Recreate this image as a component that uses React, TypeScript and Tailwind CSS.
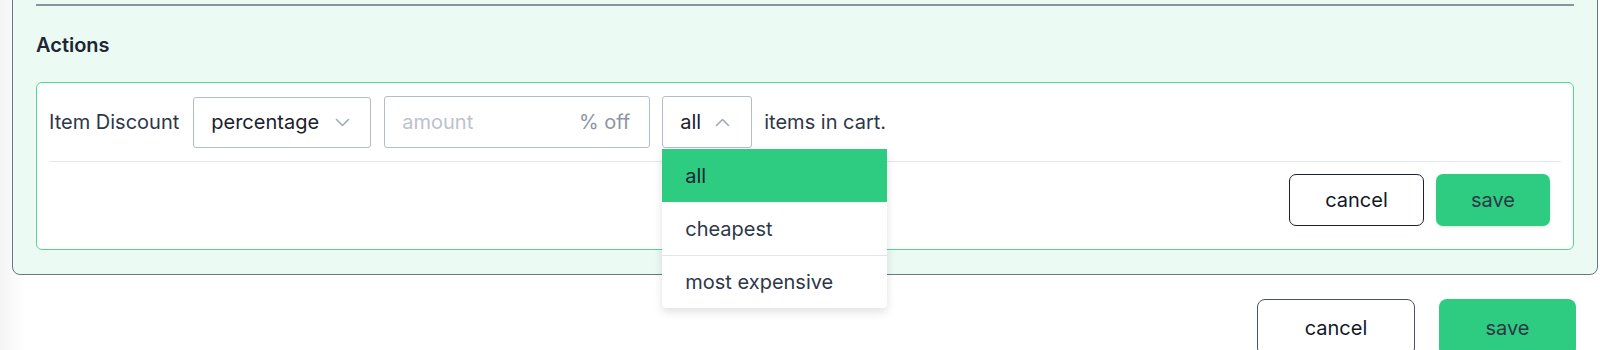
import { useState } from "react";

const font = { fontFamily: "Inter, 'Noto Sans', sans-serif" };

function Chevron({ up = false }: { up?: boolean }) {
  return (
    <svg width="15" height="9" viewBox="0 0 15 9" fill="none" className="shrink-0">
      <path
        d={up ? "M1.5 7.5L7.5 1.5L13.5 7.5" : "M1.5 1.5L7.5 7.5L13.5 1.5"}
        stroke="#a0aab8"
        strokeWidth="1.6"
        strokeLinecap="round"
        strokeLinejoin="round"
      />
    </svg>
  );
}

const options = ["all", "cheapest", "most expensive"];

export default function App() {
  const [scope] = useState("all");

  return (
    <div
      style={font}
      className="h-[350px] w-[1600px] overflow-hidden bg-[linear-gradient(to_right,#f4f4f4,#ffffff_26px)] text-[20px] text-[#2d3748]"
    >
      <div className="ml-[12px] -mt-[10px] w-[1586px] rounded-lg border border-[#6b7585] bg-[#ebfbf3] px-[23px] pt-[13px] pb-[24px]">
        <div className="h-[2px] bg-[#8b939c]" />
        <h2 className="mt-[25px] text-[20px] leading-7 font-semibold text-[#1f2633]">Actions</h2>

        <div className="mt-[23px] rounded-md border border-[#4fd793] bg-white px-[12px] pt-[13px] pb-[23px]">
          <div className="flex items-center">
            <span className="mr-[14px] whitespace-nowrap">Item Discount</span>

            <div className="flex h-[51px] w-[178px] items-center justify-between rounded-[3px] border border-[#b4bccb] bg-white pr-[20px] pl-[17px] text-[#1a202c]">
              <span>percentage</span>
              <Chevron />
            </div>

            <div className="ml-[13px] flex h-[52px] w-[266px] items-center justify-between rounded-[3px] border border-[#b4bccb] bg-white pr-[19px] pl-[17px]">
              <span className="text-[#bcc2cc]">amount</span>
              <span className="text-[#8c95a3]">% off</span>
            </div>

            <div className="relative ml-[12px]">
              <div className="flex h-[52px] w-[90px] items-center gap-[14px] rounded-[3px] border border-[#b4bccb] bg-white pl-[17px] text-[#1a202c]">
                <span>{scope}</span>
                <Chevron up />
              </div>
              <ul className="absolute top-[53px] left-0 z-10 w-[225px] overflow-hidden rounded-b-[4px] bg-white shadow-[0_4px_10px_rgba(0,0,0,0.12)]">
                {options.map((o, i) => (
                  <li
                    key={o}
                    className={
                      o === scope
                        ? "flex h-[53px] items-center bg-[#2ecc80] pl-[23px] text-[#1f2633]"
                        : i === 2
                          ? "flex h-[53px] items-center border-t border-[#e2e6ec] pl-[23px]"
                          : "flex h-[53px] items-center pl-[23px]"
                    }
                  >
                    {o}
                  </li>
                ))}
              </ul>
            </div>

            <span className="ml-[12px] whitespace-nowrap">items in cart.</span>
          </div>

          <div className="mt-[13px] h-px bg-[#e5e8ec]" />

          <div className="mt-[12px] flex justify-end gap-[12px] pr-[11px]">
            <button className="h-[52px] w-[135px] rounded-[7px] border border-[#1a202c] bg-white text-[#111827]">
              cancel
            </button>
            <button className="h-[52px] w-[114px] rounded-[7px] bg-[#2ecc80] text-[#2d3748] shadow-[0_1px_3px_rgba(0,0,0,0.12)]">
              save
            </button>
          </div>
        </div>
      </div>

      <div className="mt-[24px] ml-[12px] flex w-[1586px] justify-end gap-[24px] pr-[22px]">
        <button className="h-[57px] w-[158px] rounded-lg border border-[#4a5263] bg-white text-[#111827]">cancel</button>
        <button className="h-[57px] w-[137px] rounded-lg bg-[#2ecc80] text-[#2d3748]">save</button>
      </div>
    </div>
  );
}
